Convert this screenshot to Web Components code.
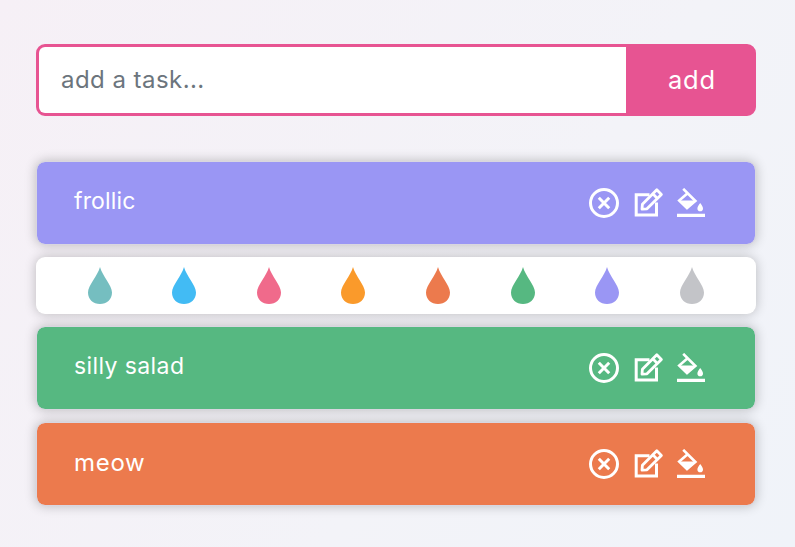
<!DOCTYPE html>
<html lang="en"><head><meta charset="utf-8"><title>Tasks</title>
<style>html{height:100%}body{margin:0;height:547px;overflow:hidden;background:linear-gradient(125deg,#f6f0f6 0%,#f3f3f8 60%,#f0f3f9 100%);font-family:Inter,"Noto Sans",sans-serif}</style></head><body>
<todo-app></todo-app>
<script>
const define=(name,html,setup)=>{const t=document.createElement('template');t.innerHTML=html;
customElements.define(name,class extends HTMLElement{constructor(){super();this.attachShadow({mode:'open'}).append(t.content.cloneNode(true));}
connectedCallback(){if(setup)setup(this,this.shadowRoot);}});};

define('task-form',`<style>
:host{display:flex;height:72px;box-sizing:border-box;border:3px solid #e75492;border-radius:9px;background:#e75492;font-size:24px}
input{flex:1;min-width:0;border:0;outline:0;padding:0 22px 2px 22px;margin:0;background:#fff;border-radius:6px 0 0 6px;font:inherit;letter-spacing:.45px}
input::placeholder{color:#6c757d;opacity:1}
button{width:127px;padding:0 0 1px 5px;border:0;background:none;color:#fff;font:inherit;font-size:25.5px;letter-spacing:.9px}
</style><input placeholder="add a task..."><button>add</button>`);

define('close-icon',`<style>:host{display:block;width:30px;height:30px}svg{display:block}</style>
<svg width="30" height="30" fill="none" stroke="#fff" stroke-width="3"><circle cx="15" cy="15" r="13.5"/><path d="M9.8 9.8l10.4 10.4M20.2 9.8L9.8 20.2"/></svg>`);
define('edit-icon',`<style>:host{display:block;width:30px;height:30px}svg{display:block;overflow:visible}</style>
<svg width="30" height="30" fill="none" stroke="#fff" stroke-width="3"><path d="M15.5 6.7H2.2V27H22.5V14.5"/><path stroke-linejoin="round" stroke-width="2.8" d="M8.4 16.2L22.8 1.8L27.4 6.4L13 20.8L8 21.2ZM18.8 5.8L23.4 10.4"/></svg>`);
define('fill-icon',`<style>:host{display:block;width:28px;height:30px}svg{display:block}</style>
<svg width="28" height="30"><path fill="none" stroke="#fff" stroke-width="2.6" d="M6.2 .8L18.4 13L10 20L2.2 12.6L10.6 5.2"/><path fill="#fff" d="M1 12.6H19.4L10 21.6ZM23.2 15C24.8 17.3 26 18.8 26 20.4A2.8 2.8 0 0 1 20.4 20.4C20.4 18.8 21.6 17.3 23.2 15ZM0 25.8H28V29H0Z"/></svg>`);

define('task-row',`<style>
:host{display:flex;align-items:center;box-sizing:border-box;height:84px;padding:0 50px 0 37px;border:1px solid #d8d6e0;border-radius:9px;background:var(--tone) padding-box;box-shadow:0 0 12px rgba(0,0,0,.24);color:#fff;font-size:23px}
.label{flex:1;padding-bottom:4px;font-size:var(--fs,23px);letter-spacing:var(--ls,0)}
close-icon{margin-right:15px}edit-icon{margin-right:13px}
</style><span class="label"><slot></slot></span><close-icon></close-icon><edit-icon></edit-icon><fill-icon></fill-icon>`);

define('color-drop',`<style>:host{display:block;width:24px;height:38px}svg{display:block}</style>
<svg width="24" height="38"><path fill="currentColor" d="M12 0C14.5 9 24 18.5 24 25.5C24 32.5 18.6 37 12 37S0 32.5 0 25.5C0 18.5 9.5 9 12 0Z"/></svg>`);
define('color-picker',`<style>
:host{display:flex;justify-content:space-between;align-items:center;box-sizing:border-box;height:57px;padding:0 52px 0 51.5px;border-radius:9px;background:#fff;box-shadow:0 0 12px rgba(0,0,0,.24)}
</style>`,(el,root)=>{for(const c of ['#75bec0','#42bbf4','#f06a8b','#fa9a2b','#ec7a4d','#56b881','#9a96f4','#c3c4c8']){const d=document.createElement('color-drop');d.style.color=c;root.append(d);}});

define('todo-app',`<style>
:host{display:block;box-sizing:border-box;padding:44px 39px 0 36px}
.list{display:grid;gap:12px;margin-top:45px}
</style><task-form></task-form><div class="list">
<task-row style="--tone:#9a96f4;--ls:.15px">frollic</task-row><color-picker></color-picker>
<task-row style="--tone:#56b881;--ls:.4px">silly salad</task-row><task-row style="--tone:#ec7a4d;--fs:24px;--ls:.7px">meow</task-row></div>`);
</script></body></html>
